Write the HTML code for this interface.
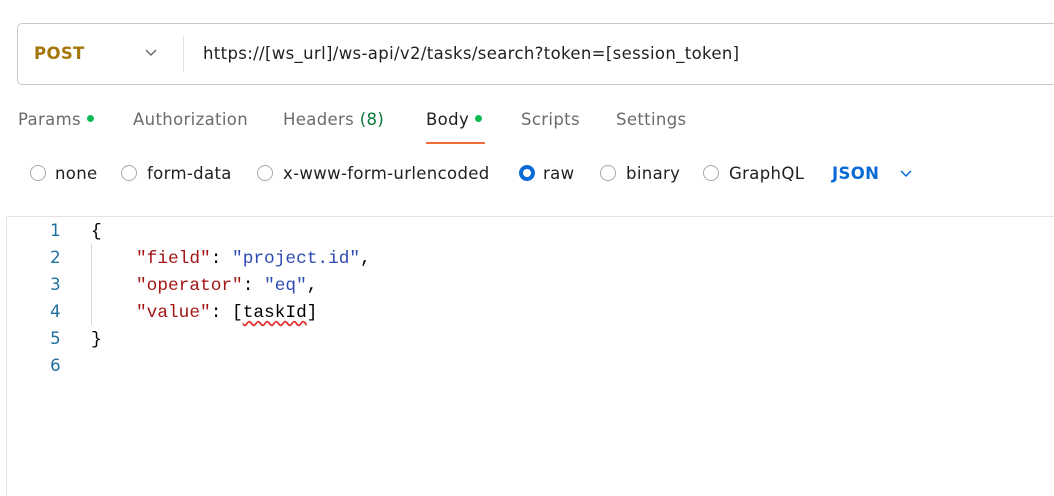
<!DOCTYPE html>
<html><head><style>
body{margin:0;width:1054px;height:490px;background:#fff;font-family:"DejaVu Sans","Liberation Sans",sans-serif;position:relative;overflow:hidden;letter-spacing:0.35px}
.a{position:absolute;white-space:nowrap}
.box{position:absolute;left:17px;top:23px;width:1050px;height:60px;border:1px solid #c8c8c8;border-radius:5px}
.tab{font-size:16.5px;color:#6b6b6b;top:110px}
.dot{display:inline-block;width:7px;height:7px;border-radius:50%;background:#0cbb52;margin-left:6px;vertical-align:3px}
.opt{top:164px;font-size:16.5px;color:#212121}
.r{position:absolute;top:165px;width:16px;height:16px;border:1px solid #a8a8a8;border-radius:50%;box-sizing:border-box}
.code{font-family:"Liberation Mono",monospace;font-size:17.8px;letter-spacing:0}
.ln{color:#1e6ea0;font-family:"DejaVu Sans",sans-serif;font-size:16.5px;width:20px;text-align:right}
.k{color:#a31515}.s{color:#2f49b5}
</style></head><body>
<div class="box"></div>
<div class="a" style="left:34px;top:44px;font-size:16.5px;font-weight:bold;color:#a5770b">POST</div>
<svg class="a" style="left:144px;top:48px" width="14" height="10"><path d="M2 2l5 5 5-5" fill="none" stroke="#666" stroke-width="1.4"/></svg>
<div class="a" style="left:183px;top:36px;width:1px;height:36px;background:#e2e2e2"></div>
<div class="a" style="left:203px;top:44px;font-size:16.5px;color:#212121">https://[ws_url]/ws-api/v2/tasks/search?token=[session_token]</div>

<div class="a tab" style="left:18px">Params<span class="dot"></span></div>
<div class="a tab" style="left:133px">Authorization</div>
<div class="a tab" style="left:283px">Headers <span style="color:#0a7a3a">(8)</span></div>
<div class="a tab" style="left:426px;color:#212121">Body<span class="dot"></span></div>
<div class="a" style="left:426px;top:142px;width:59px;height:2px;background:#f26b3a"></div>
<div class="a tab" style="left:521px">Scripts</div>
<div class="a tab" style="left:616px">Settings</div>

<div class="r" style="left:30px"></div><div class="a opt" style="left:55px">none</div>
<div class="r" style="left:121px"></div><div class="a opt" style="left:147px">form-data</div>
<div class="r" style="left:257px"></div><div class="a opt" style="left:283px">x-www-form-urlencoded</div>
<div class="r" style="left:519px;border:4px solid #0b6bd6;width:16px;height:16px;top:165px"></div><div class="a opt" style="left:543px">raw</div>
<div class="r" style="left:600px"></div><div class="a opt" style="left:626px">binary</div>
<div class="r" style="left:703px"></div><div class="a opt" style="left:729px">GraphQL</div>
<div class="a opt" style="left:832px;font-weight:bold;color:#0b6bd6">JSON</div>
<svg class="a" style="left:899px;top:169px" width="14" height="10"><path d="M2 2l5 5 5-5" fill="none" stroke="#0b6bd6" stroke-width="1.5"/></svg>

<div class="a" style="left:6px;top:216px;width:1060px;height:1px;background:#e3e3e3"></div>
<div class="a" style="left:6px;top:216px;width:1px;height:280px;background:#e3e3e3"></div>

<div class="a ln" style="left:41px;top:221px">1</div>
<div class="a ln" style="left:41px;top:248px">2</div>
<div class="a ln" style="left:41px;top:275px">3</div>
<div class="a ln" style="left:41px;top:302px">4</div>
<div class="a ln" style="left:41px;top:329px">5</div>
<div class="a ln" style="left:41px;top:356px">6</div>
<div class="a" style="left:91px;top:244px;width:1px;height:81px;background:#d8d8d8"></div>
<div class="a code" style="left:91px;top:222px">{</div>
<div class="a code" style="left:136px;top:249px"><span class="k">"field"</span>: <span class="s">"project.id"</span>,</div>
<div class="a code" style="left:136px;top:276px"><span class="k">"operator"</span>: <span class="s">"eq"</span>,</div>
<div class="a code" style="left:136px;top:303px"><span class="k">"value"</span>: [<span style="text-decoration:underline wavy #e03030;text-underline-offset:3px">taskId</span>]</div>
<div class="a code" style="left:91px;top:330px">}</div>
</body></html>
